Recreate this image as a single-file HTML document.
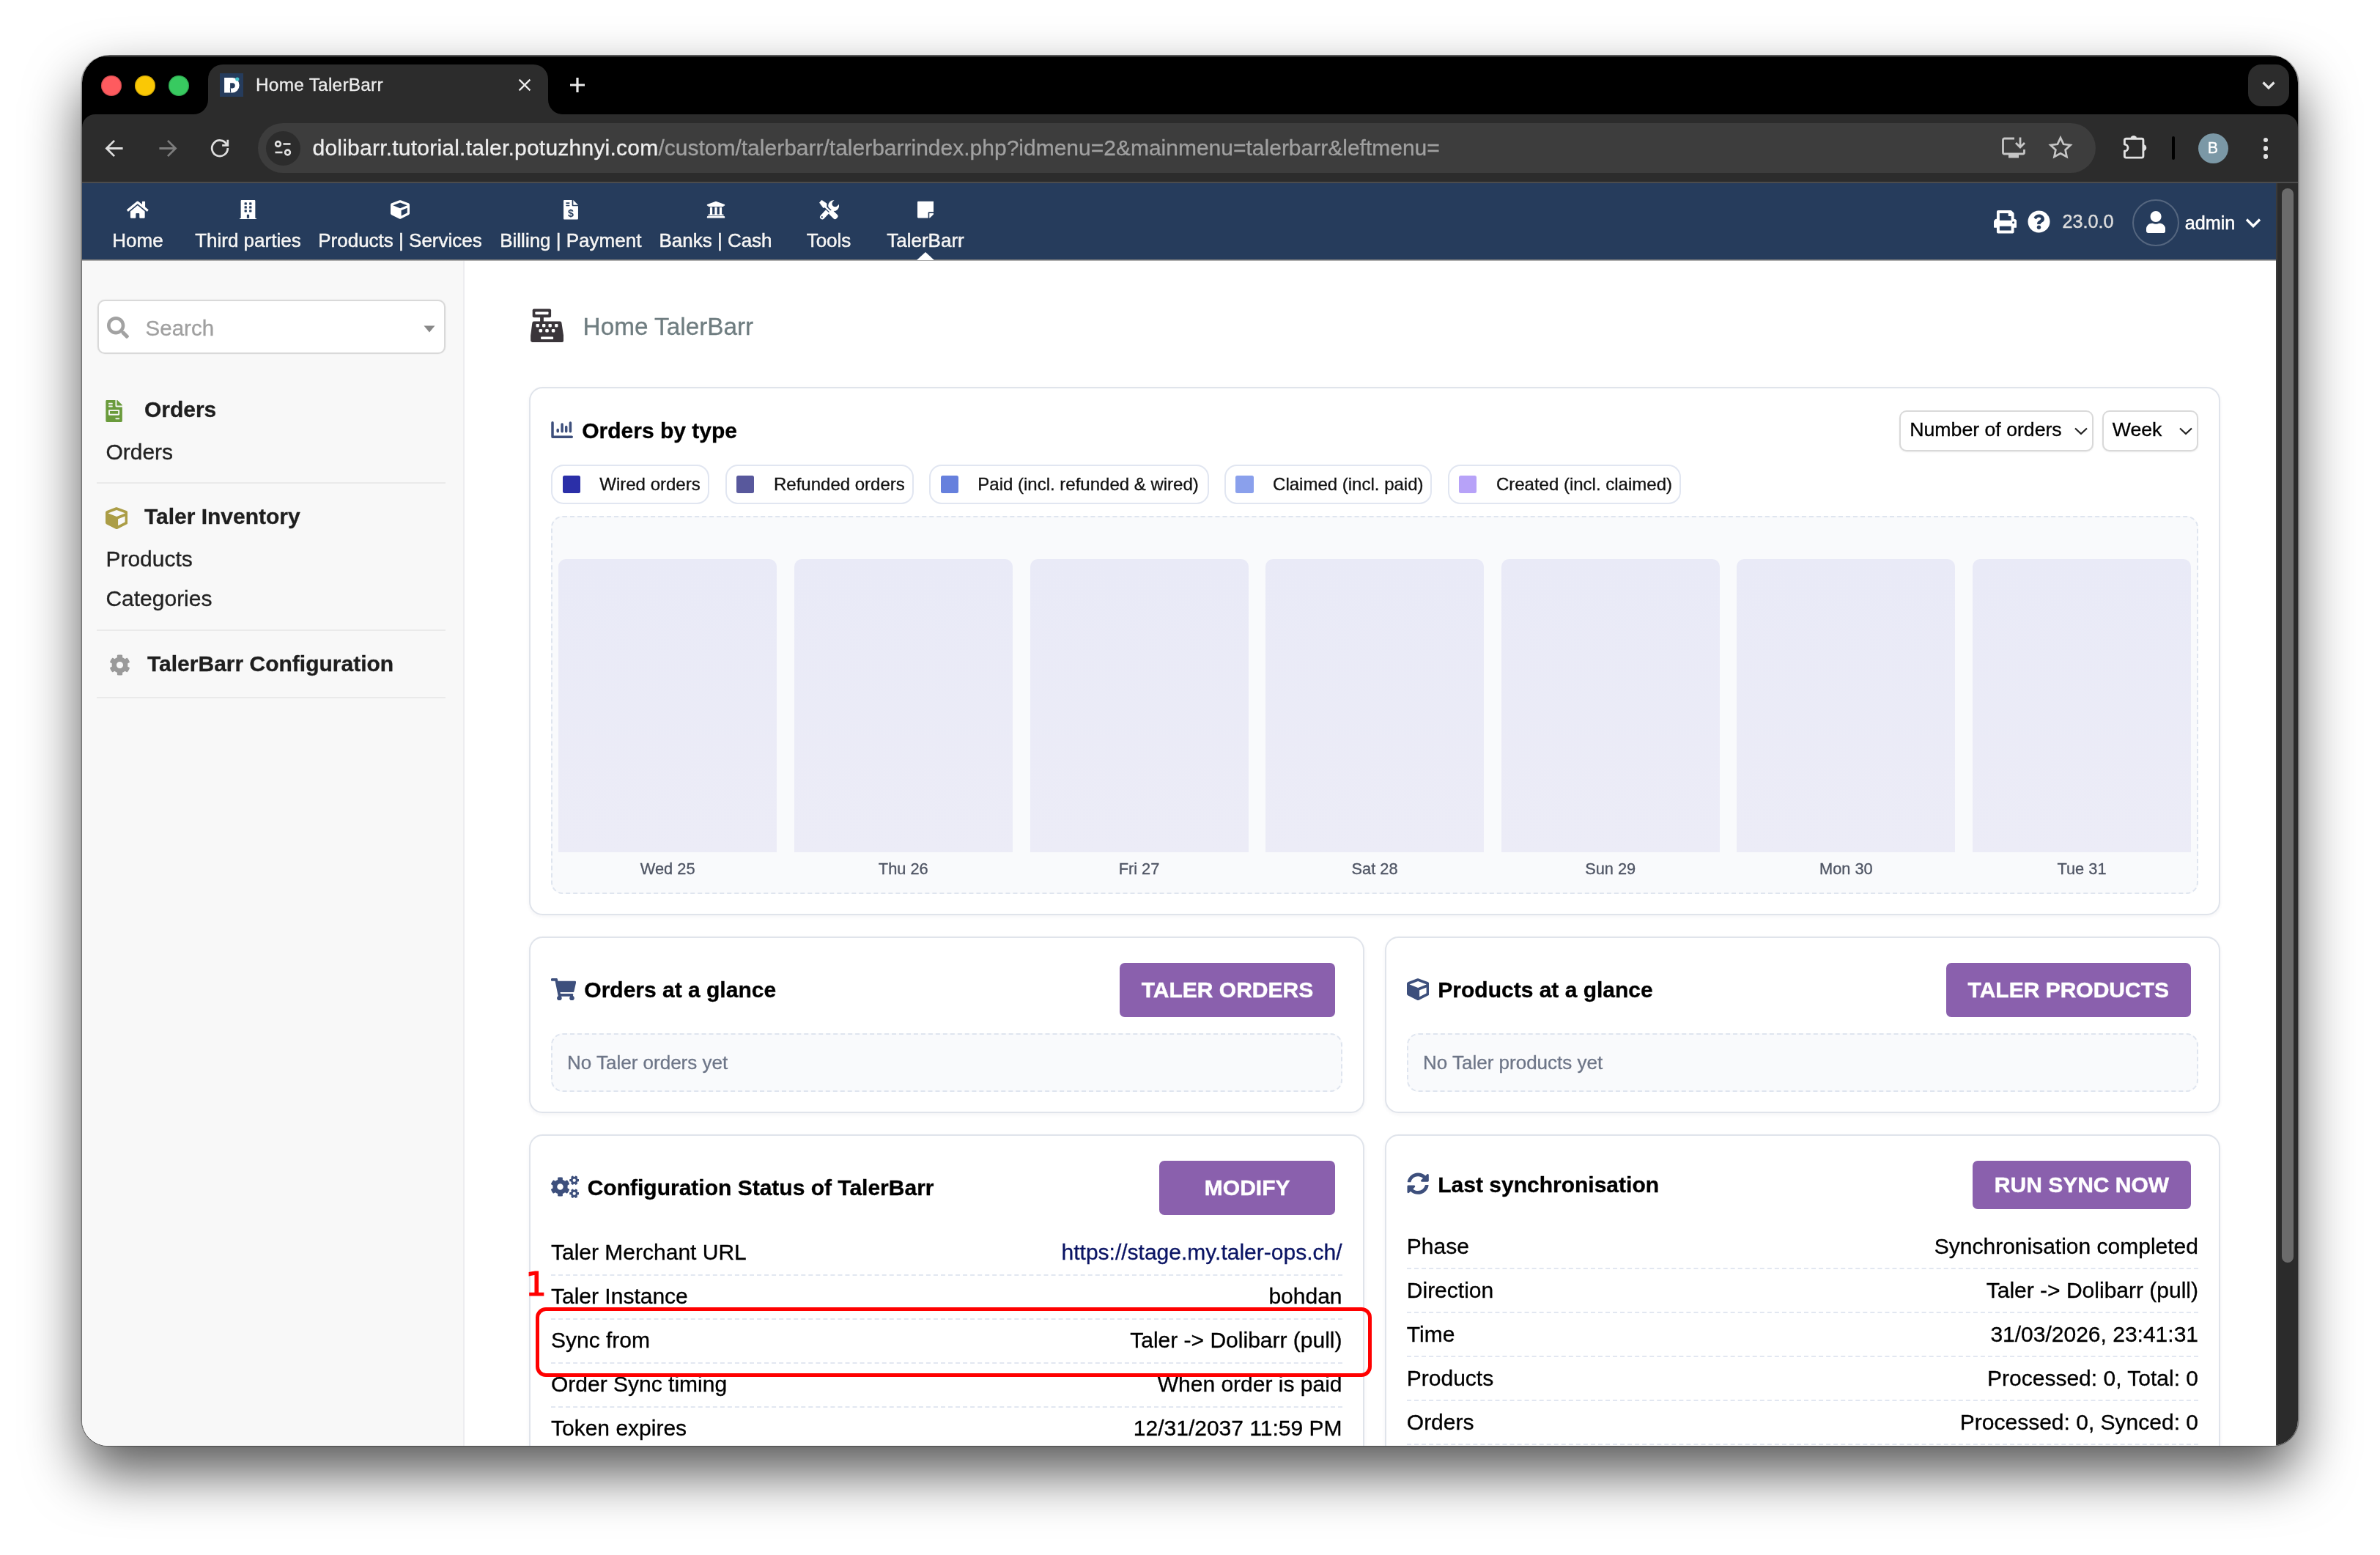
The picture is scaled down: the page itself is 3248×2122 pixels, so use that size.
<!DOCTYPE html>
<html lang="en"><head><meta charset="utf-8"><title>Home TalerBarr</title>
<style>
html,body{margin:0;padding:0;}
body{width:3248px;height:2122px;background:#fff;position:relative;overflow:hidden;font-family:"Liberation Sans",sans-serif;}
.b{position:absolute;box-sizing:border-box;display:block;}
.t{position:absolute;white-space:nowrap;line-height:1;-webkit-text-stroke:.32px;}
#win{position:absolute;left:112px;top:75px;width:3024px;height:1898px;border-radius:38px 38px 35px 35px;overflow:hidden;background:#fff;}
#shadow{position:absolute;left:112px;top:75px;width:3024px;height:1898px;border-radius:38px 38px 35px 35px;
 box-shadow:-1.5px 0 0 0 rgba(0,0,0,.32),1.5px 0 0 0 rgba(0,0,0,.32),0 1.2px 0 0 rgba(0,0,0,.3),0 37px 76px rgba(0,0,0,.66);}
#in{position:absolute;left:-112px;top:-75px;width:3248px;height:2122px;will-change:transform;}
</style></head><body>
<div id="shadow"></div>
<div id="win"><div id="in">

<div class="b" style="left:112.0px;top:75.0px;width:3024.0px;height:115.0px;background:#000;"></div>
<div class="b" style="left:112.0px;top:75.0px;width:3024.0px;height:3.4px;background:linear-gradient(#6c6c6c,#3c3c3c 60%,#000);"></div>
<div class="b" style="left:112.0px;top:156.0px;width:3024.0px;height:93.0px;background:#2c2c2c;border-radius:18px 18px 0 0;"></div>
<div class="b" style="left:112.0px;top:248.0px;width:3024.0px;height:2.0px;background:#4c4c4c;"></div>
<div class="b" style="left:283.5px;top:87.6px;width:464.3px;height:72.4px;background:#2c2c2c;border-radius:20px 20px 0 0;"></div>
<svg class="b" style="left:263.5px;top:136.0px;" width="20.0" height="20.0" viewBox="0 0 20 20"><path fill="#2c2c2c" d="M20 0v20H0A20 20 0 0 0 20 0z"/></svg>
<svg class="b" style="left:747.8px;top:136.0px;" width="20.0" height="20.0" viewBox="0 0 20 20"><path fill="#2c2c2c" d="M0 0v20h20A20 20 0 0 1 0 0z"/></svg>
<div class="b" style="left:137.9px;top:102.7px;width:28.4px;height:28.4px;background:#fe5b5f;border-radius:50%;box-shadow:inset 0 0 0 1.200px rgba(0,0,0,.16);"></div>
<div class="b" style="left:183.8px;top:102.7px;width:28.4px;height:28.4px;background:#fac805;border-radius:50%;box-shadow:inset 0 0 0 1.200px rgba(0,0,0,.16);"></div>
<div class="b" style="left:229.6px;top:102.7px;width:28.4px;height:28.4px;background:#38ca60;border-radius:50%;box-shadow:inset 0 0 0 1.200px rgba(0,0,0,.16);"></div>
<div class="b" style="left:300.0px;top:100.0px;width:32.0px;height:32.0px;background:#263c5c;"></div>
<svg class="b" style="left:300.0px;top:100.0px;" width="32.0" height="32.0" viewBox="0 0 32 32"><path fill="#fff" fill-rule="evenodd" d="M6.100 6H17.300A9.300 10.250 0 0 1 17.300 26.500H6.100zM14.100 13.300V20.400H17.400A3.400 3.550 0 0 0 17.400 13.300z"/><path d="M14.300 20.400L14.700 26.500" stroke="#263c5c" stroke-width="1.100"/><circle cx="23.800" cy="8" r="2.600" fill="#45c0c8"/></svg>
<div class="t" style="left:349.0px;top:103.6px;font-size:24.4px;color:#ececec;font-weight:400;letter-spacing:.25px;">Home TalerBarr</div>
<svg class="b" style="left:704.0px;top:104.0px;" width="24.0" height="24.0" viewBox="0 0 24 24"><path d="M4.600 4.600l14.800 14.800M19.400 4.600l-14.800 14.800" stroke="#eaeaea" stroke-width="2.300" fill="none" stroke-linecap="butt"/></svg>
<svg class="b" style="left:774.0px;top:102.0px;" width="28.0" height="28.0" viewBox="0 0 28 28"><path d="M14 4v20M4 14h20" stroke="#eaeaea" stroke-width="3.200" fill="none"/></svg>
<div class="b" style="left:3068.0px;top:88.0px;width:56.0px;height:56.5px;background:#2c2c2c;border-radius:18px;"></div>
<svg class="b" style="left:3082.0px;top:104.0px;" width="28.0" height="24.0" viewBox="0 0 28 24"><path d="M6.500 8.500l7.500 7.500 7.500-7.500" stroke="#e6e6e6" stroke-width="3.200" fill="none"/></svg>
<svg class="b" style="left:137.5px;top:183.5px;" width="37.0" height="37.0" viewBox="0 0 40 40"><path d="M32 20H9M19.500 8.500L8 20l11.500 11.500" stroke="#dedede" stroke-width="3" fill="none"/></svg>
<svg class="b" style="left:209.5px;top:183.5px;" width="37.0" height="37.0" viewBox="0 0 40 40"><path d="M8 20h23M20.500 8.500L32 20 20.500 31.500" stroke="#7d7d7d" stroke-width="3" fill="none"/></svg>
<svg class="b" style="left:282.0px;top:184.0px;" width="36.0" height="36.0" viewBox="0 0 40 40"><path d="M30.500 14.500A12 12 0 1 0 32 20" stroke="#dedede" stroke-width="3" fill="none"/><path d="M32 7.500v8.500h-8.500" stroke="#dedede" stroke-width="3" fill="none"/></svg>
<div class="b" style="left:352.0px;top:168.0px;width:2508.0px;height:68.0px;background:#3d3d3d;border-radius:34px;"></div>
<div class="b" style="left:362.5px;top:178.5px;width:47.0px;height:47.0px;background:#2c2c2c;border-radius:50%;"></div>
<svg class="b" style="left:370.0px;top:186.0px;" width="32.0" height="32.0" viewBox="0 0 32 32"><g stroke="#e2e2e2" stroke-width="2.600" fill="none"><circle cx="9.500" cy="10.500" r="3.400"/><path d="M16.500 10.500h10"/><circle cx="22.500" cy="22" r="3.400"/><path d="M5.500 22h10"/></g></svg>
<div class="t" style="left:426.500px;top:186.9px;font-size:30px;color:#a0a0a0;letter-spacing:0px;"><span style="color:#eeeeee;letter-spacing:.225px;">dolibarr.tutorial.taler.potuzhnyi.com</span>/custom/talerbarr/talerbarrindex.php?idmenu=2&amp;mainmenu=talerbarr&amp;leftmenu=</div>
<svg class="b" style="left:2730.0px;top:184.0px;" width="36.0" height="36.0" viewBox="0 0 36 36"><g stroke="#c6c6c6" stroke-width="2.800" fill="none"><path d="M19 5H5.500a2 2 0 0 0-2 2v17a2 2 0 0 0 2 2h25a2 2 0 0 0 2-2v-4"/><path d="M27 3.500v13M21 11l6 6 6-6"/></g><rect x="11" y="27" width="14" height="4.500" fill="#c6c6c6"/></svg>
<svg class="b" style="left:2795.0px;top:184.0px;" width="34.0" height="34.0" viewBox="0 0 34 34"><path d="M17 4l4.100 8.800 9.500 1.100-7 6.600 1.900 9.500L17 25.300 8.500 30l1.900-9.500-7-6.600 9.500-1.100z" stroke="#c6c6c6" stroke-width="2.700" fill="none" stroke-linejoin="miter"/></svg>
<svg class="b" style="left:2896.0px;top:182.0px;" width="36.0" height="36.0" viewBox="0 0 36 36"><path d="M3.400 15.100V9.300a2 2 0 0 1 2-2H26.900a2 2 0 0 1 2 2V31.100a2 2 0 0 1-2 2H5.400a2 2 0 0 1-2-2V24.300A4.600 4.600 0 0 0 3.400 15.100z" stroke="#e2e2e2" stroke-width="2.900" fill="none" stroke-linejoin="round"/><path d="M11.400 7.300a4.400 4.400 0 0 1 8.800 0z" fill="#e2e2e2"/><path d="M28.900 15.300a4.400 4.400 0 0 1 0 8.800z" fill="#e2e2e2"/></svg>
<div class="b" style="left:2964.0px;top:185.5px;width:4.0px;height:32.5px;background:#000;border-radius:2px;"></div>
<div class="b" style="left:2999.5px;top:181.5px;width:41.0px;height:41.0px;background:#7b98a6;border-radius:50%;"></div>
<div class="t" style="left:3020.0px;top:191.9px;font-size:21.5px;color:#fff;font-weight:400;transform:translateX(-50%);">B</div>
<div class="b" style="left:3088.5px;top:187.6px;width:6.8px;height:6.8px;background:#e2e2e2;border-radius:50%;"></div>
<div class="b" style="left:3088.5px;top:198.9px;width:6.8px;height:6.8px;background:#e2e2e2;border-radius:50%;"></div>
<div class="b" style="left:3088.5px;top:210.0px;width:6.8px;height:6.8px;background:#e2e2e2;border-radius:50%;"></div>
<div class="b" style="left:112.0px;top:250.0px;width:2994.0px;height:1723.0px;background:#fff;"></div>
<div class="b" style="left:112.0px;top:354.0px;width:522.0px;height:1619.0px;background:#f8f8f8;border-right:2px solid #ededf0;"></div>
<div class="b" style="left:112.0px;top:250.0px;width:2994.0px;height:103.6px;background:#263c5c;"></div>
<div class="b" style="left:112.0px;top:353.6px;width:2994.0px;height:2.6px;background:linear-gradient(#707070,#8c8c8c 55%,rgba(190,190,190,.6));"></div>
<div class="t" style="left:188.0px;top:315.3px;font-size:26px;color:#f6f6f6;font-weight:400;transform:translateX(-50%);-webkit-text-stroke:.5px;text-shadow:0 0 2px rgba(0,0,0,.3);">Home</div>
<svg class="b" style="left:173.2px;top:272.9px;" width="29.6" height="26.3" viewBox="0 0 576 512"><path fill="#fff" d="M280.37 148.26L96 300.11V464a16 16 0 0 0 16 16l112.06-.29a16 16 0 0 0 15.92-16V368a16 16 0 0 1 16-16h64a16 16 0 0 1 16 16v95.64a16 16 0 0 0 16 16.05L464 480a16 16 0 0 0 16-16V300L295.67 148.26a12.19 12.19 0 0 0-15.3 0zM571.6 251.47L488 182.56V44.05a12 12 0 0 0-12-12h-56a12 12 0 0 0-12 12v72.61L318.47 43a48 48 0 0 0-61 0L4.34 251.47a12 12 0 0 0-1.6 16.9l25.5 31A12 12 0 0 0 45.15 301l235.22-193.74a12.19 12.19 0 0 1 15.3 0L530.9 301a12 12 0 0 0 16.9-1.6l25.5-31a12 12 0 0 0-1.7-16.93z"/></svg>
<div class="t" style="left:338.4px;top:315.3px;font-size:26px;color:#f6f6f6;font-weight:400;transform:translateX(-50%);-webkit-text-stroke:.5px;text-shadow:0 0 2px rgba(0,0,0,.3);">Third parties</div>
<svg class="b" style="left:326.9px;top:272.9px;" width="23.0" height="26.3" viewBox="0 0 448 512"><path fill="#fff" d="M436 480h-20V24c0-13.255-10.745-24-24-24H56C42.745 0 32 10.745 32 24v456H12c-6.627 0-12 5.373-12 12v20h448v-20c0-6.627-5.373-12-12-12zM128 76c0-6.627 5.373-12 12-12h40c6.627 0 12 5.373 12 12v40c0 6.627-5.373 12-12 12h-40c-6.627 0-12-5.373-12-12V76zm0 96c0-6.627 5.373-12 12-12h40c6.627 0 12 5.373 12 12v40c0 6.627-5.373 12-12 12h-40c-6.627 0-12-5.373-12-12v-40zm52 148h-40c-6.627 0-12-5.373-12-12v-40c0-6.627 5.373-12 12-12h40c6.627 0 12 5.373 12 12v40c0 6.627-5.373 12-12 12zm76 160h-64v-84c0-6.627 5.373-12 12-12h40c6.627 0 12 5.373 12 12v84zm64-172c0 6.627-5.373 12-12 12h-40c-6.627 0-12-5.373-12-12v-40c0-6.627 5.373-12 12-12h40c6.627 0 12 5.373 12 12v40zm0-96c0 6.627-5.373 12-12 12h-40c-6.627 0-12-5.373-12-12v-40c0-6.627 5.373-12 12-12h40c6.627 0 12 5.373 12 12v40zm0-96c0 6.627-5.373 12-12 12h-40c-6.627 0-12-5.373-12-12V76c0-6.627 5.373-12 12-12h40c6.627 0 12 5.373 12 12v40z"/></svg>
<div class="t" style="left:546.0px;top:315.3px;font-size:26px;color:#f6f6f6;font-weight:400;transform:translateX(-50%);-webkit-text-stroke:.5px;text-shadow:0 0 2px rgba(0,0,0,.3);">Products | Services</div>
<svg class="b" style="left:533.0px;top:273.0px;" width="26.0" height="26.0" viewBox="0 0 512 512"><path fill="#fff" d="M239.1 6.3l-208 78c-18.7 7-31.1 25-31.1 45v225.1c0 18.2 10.3 34.8 26.5 42.900l208 104c13.500 6.800 29.400 6.800 42.900 0l208-104c16.300-8.100 26.500-24.800 26.500-42.900V129.300c0-20-12.400-37.900-31.100-44.900l-208-78C262 2.200 250 2.200 239.100 6.300zM256 68.400l192 72v1.100l-192 78-192-78v-1.100l192-72zm32 356V275.500l160-65v133.900l-160 80z"/></svg>
<div class="t" style="left:778.8px;top:315.3px;font-size:26px;color:#f6f6f6;font-weight:400;transform:translateX(-50%);-webkit-text-stroke:.5px;text-shadow:0 0 2px rgba(0,0,0,.3);">Billing | Payment</div>
<div class="t" style="left:976.5px;top:315.3px;font-size:26px;color:#f6f6f6;font-weight:400;transform:translateX(-50%);-webkit-text-stroke:.5px;text-shadow:0 0 2px rgba(0,0,0,.3);">Banks | Cash</div>
<svg class="b" style="left:963.5px;top:273.0px;" width="26.0" height="26.0" viewBox="0 0 512 512"><path fill="#fff" d="M496 128v16a8 8 0 0 1-8 8h-24v12c0 6.627-5.373 12-12 12H60c-6.627 0-12-5.373-12-12v-12H24a8 8 0 0 1-8-8v-16a8 8 0 0 1 4.941-7.392l232-88a7.996 7.996 0 0 1 6.118 0l232 88A8 8 0 0 1 496 128zm-24 304H40c-13.255 0-24 10.745-24 24v16a8 8 0 0 0 8 8h464a8 8 0 0 0 8-8v-16c0-13.255-10.745-24-24-24zM96 192v192H60c-6.627 0-12 5.373-12 12v20h416v-20c0-6.627-5.373-12-12-12h-36V192h-64v192h-64V192h-64v192h-64V192H96z"/></svg>
<div class="t" style="left:1131.0px;top:315.3px;font-size:26px;color:#f6f6f6;font-weight:400;transform:translateX(-50%);-webkit-text-stroke:.5px;text-shadow:0 0 2px rgba(0,0,0,.3);">Tools</div>
<div class="t" style="left:1263.0px;top:315.3px;font-size:26px;color:#f6f6f6;font-weight:400;transform:translateX(-50%);-webkit-text-stroke:.5px;text-shadow:0 0 2px rgba(0,0,0,.3);">TalerBarr</div>
<svg class="b" style="left:1251.6px;top:273.0px;" width="22.8" height="26.0" viewBox="0 0 448 512"><path fill="#fff" d="M312 320h136V56c0-13.3-10.7-24-24-24H24C10.7 32 0 42.7 0 56v400c0 13.3 10.7 24 24 24h264V344c0-13.2 10.8-24 24-24zm129 55l-98 98c-4.5 4.5-10.6 7-17 7h-6V352h128v6.1c0 6.300-2.500 12.400-7 16.900z"/></svg>
<svg class="b" style="left:768.8px;top:273.0px;" width="20.0" height="26.5" viewBox="0 0 384 512"><path fill="#fff" d="M224 0H24C10.700 0 0 10.700 0 24v464c0 13.300 10.700 24 24 24h336c13.300 0 24-10.700 24-24V160H248c-13.200 0-24-10.800-24-24zM64 72c0-4.400 3.600-8 8-8h80c4.400 0 8 3.600 8 8v16c0 4.400-3.600 8-8 8H72c-4.400 0-8-3.600-8-8zm0 64c0-4.400 3.600-8 8-8h80c4.400 0 8 3.600 8 8v16c0 4.400-3.600 8-8 8H72c-4.400 0-8-3.600-8-8zM256 0v128h128L256 0z"/><text x="192" y="440" font-size="275" font-weight="700" text-anchor="middle" fill="#263c5c" font-family="Liberation Sans,sans-serif">$</text></svg>
<svg class="b" style="left:1118.0px;top:273.0px;" width="26.5" height="26.5" viewBox="0 0 26 26"><g fill="none"><path d="M4.200 22.700L11.400 15" stroke="#fff" stroke-width="6.400" stroke-linecap="round"/><circle cx="3.700" cy="22.800" r="1.100" fill="#263c5c"/><path d="M15.600 11.200L11.800 15" stroke="#fff" stroke-width="5.200"/><circle cx="19.300" cy="7.500" r="7.300" fill="#fff"/><path d="M21.300 4.900L28 -1.800" stroke="#263c5c" stroke-width="8.400" stroke-linecap="round"/><path d="M6 7L16.500 16.800" stroke="#263c5c" stroke-width="4.800"/><polygon points="3.300,0.300 9.800,4.750 9.800,8.800 5.500,10.300 0.500,3.500" fill="#fff" stroke="#fff" stroke-width=".8" stroke-linejoin="round"/><path d="M8 9L15.500 16" stroke="#fff" stroke-width="2.300"/><g transform="translate(14.300,14.900) rotate(45)"><rect x="0" y="-3.600" width="13.200" height="7.200" rx="2.800" fill="#fff"/></g></g></svg>
<svg class="b" style="left:1251.0px;top:344.0px;" width="24.0" height="11.0" viewBox="0 0 24 11"><path d="M0 11L12 0l12 11z" fill="#fff"/></svg>
<svg class="b" style="left:2720.7px;top:287.2px;" width="31.5" height="31.5" viewBox="0 0 512 512"><path fill="#fff" d="M448 192V77.25c0-8.490-3.370-16.620-9.370-22.630L393.370 9.370c-6-6-14.140-9.370-22.630-9.370H96C78.330 0 64 14.330 64 32v160c-35.350 0-64 28.650-64 64v112c0 8.840 7.160 16 16 16h48v96c0 17.670 14.330 32 32 32h320c17.670 0 32-14.330 32-32v-96h48c8.840 0 16-7.160 16-16V256c0-35.350-28.650-64-64-64zm-64 256H128v-96h256v96zm0-224H128V64h192v48c0 8.840 7.160 16 16 16h48v96zm48 72c-13.250 0-24-10.750-24-24 0-13.260 10.750-24 24-24s24 10.740 24 24c0 13.250-10.750 24-24 24z"/></svg>
<svg class="b" style="left:2767.0px;top:287.3px;" width="31.0" height="31.0" viewBox="0 0 512 512"><path fill="#fff" d="M504 256c0 136.997-111.043 248-248 248S8 392.997 8 256C8 119.083 119.043 8 256 8s248 111.083 248 248zM262.655 90c-54.497 0-89.255 22.957-116.549 63.758-3.536 5.286-2.353 12.415 2.715 16.258l34.699 26.310c5.205 3.947 12.621 3.008 16.665-2.122 17.864-22.658 30.113-35.797 57.303-35.797 20.429 0 45.698 13.148 45.698 32.958 0 14.976-12.363 22.667-32.534 33.976C247.128 238.528 216 254.941 216 296v4c0 6.627 5.373 12 12 12h56c6.627 0 12-5.373 12-12v-1.333c0-28.462 83.186-29.647 83.186-106.667 0-58.002-60.165-102-116.531-102zM256 338c-25.365 0-46 20.635-46 46 0 25.364 20.635 46 46 46s46-20.636 46-46c0-25.365-20.635-46-46-46z"/></svg>
<div class="t" style="left:2814.6px;top:289.5px;font-size:25.2px;color:#dcdcdc;font-weight:400;-webkit-text-stroke:.45px;">23.0.0</div>
<div class="b" style="left:2910.0px;top:272.0px;width:64.0px;height:64.0px;border:2px solid rgba(255,255,255,.22);border-radius:50%;"></div>
<svg class="b" style="left:2929.1px;top:287.7px;" width="26.2" height="30.0" viewBox="0 0 448 512"><path fill="#fff" d="M224 256c70.7 0 128-57.3 128-128S294.7 0 224 0 96 57.3 96 128s57.3 128 128 128zm89.6 32h-16.7c-22.2 10.2-46.9 16-72.9 16s-50.6-5.8-72.9-16h-16.7C60.2 288 0 348.2 0 422.400V464c0 26.500 21.500 48 48 48h352c26.500 0 48-21.500 48-48v-41.600c0-74.200-60.200-134.400-134.400-134.400z"/></svg>
<div class="t" style="left:2981.7px;top:291.9px;font-size:25.2px;color:#fff;font-weight:400;-webkit-text-stroke:.5px;text-shadow:0 0 2px rgba(0,0,0,.3);">admin</div>
<svg class="b" style="left:3063.0px;top:295.0px;" width="24.0" height="18.0" viewBox="0 0 24 18"><path d="M3 4.500l9 9 9-9" stroke="#fff" stroke-width="3.400" fill="none"/></svg>
<div class="b" style="left:132.6px;top:408.6px;width:475.4px;height:74.6px;background:#fff;border:2px solid #d9d9d9;border-radius:10px;box-shadow:0 0 2px rgba(0,0,0,.08);"></div>
<svg class="b" style="left:146.0px;top:431.6px;" width="30.0" height="30.0" viewBox="0 0 512 512"><path fill="#a2a2a2" d="M505 442.7L405.3 343c-4.5-4.5-10.6-7-17-7H372c27.6-35.3 44-79.7 44-128C416 93.1 322.9 0 208 0S0 93.1 0 208s93.1 208 208 208c48.3 0 92.7-16.4 128-44v16.3c0 6.400 2.500 12.500 7 17l99.700 99.700c9.400 9.400 24.600 9.400 33.900 0l28.300-28.300c9.400-9.400 9.400-24.600.100-34zM208 336c-70.700 0-128-57.200-128-128 0-70.700 57.200-128 128-128 70.700 0 128 57.200 128 128 0 70.700-57.200 128-128 128z"/></svg>
<div class="t" style="left:198.6px;top:433.3px;font-size:29.5px;color:#a0a0a0;font-weight:400;">Search</div>
<svg class="b" style="left:578.0px;top:444.0px;" width="16.0" height="10.0" viewBox="0 0 16 10"><path d="M0.500 0.500h15L8 9.500z" fill="#888"/></svg>
<svg class="b" style="left:143.8px;top:545.7px;" width="23.2" height="30.0" viewBox="0 0 384 512"><path fill="#6a9b3c" d="M288 256H96v64h192v-64zm89-151L279.100 7c-4.500-4.500-10.600-7-17-7H256v128h128v-6.100c0-6.300-2.500-12.400-7-16.900zm-153 31V0H24C10.700 0 0 10.700 0 24v464c0 13.300 10.700 24 24 24h336c13.300 0 24-10.700 24-24V160H248c-13.200 0-24-10.800-24-24zM64 72c0-4.420 3.580-8 8-8h80c4.420 0 8 3.580 8 8v16c0 4.420-3.580 8-8 8H72c-4.420 0-8-3.580-8-8V72zm0 64c0-4.420 3.580-8 8-8h80c4.420 0 8 3.580 8 8v16c0 4.420-3.580 8-8 8H72c-4.420 0-8-3.580-8-8v-16zm256 304c0 4.420-3.580 8-8 8h-80c-4.420 0-8-3.580-8-8v-16c0-4.420 3.580-8 8-8h80c4.420 0 8 3.580 8 8v16zm0-200v96c0 8.840-7.160 16-16 16H80c-8.840 0-16-7.160-16-16v-96c0-8.840 7.160-16 16-16h224c8.840 0 16 7.160 16 16z"/></svg>
<div class="t" style="left:196.9px;top:544.1px;font-size:30px;color:#1e1e1e;font-weight:700;">Orders</div>
<div class="t" style="left:144.4px;top:602.1px;font-size:30px;color:#222;font-weight:400;">Orders</div>
<div class="b" style="left:132.0px;top:658.0px;width:476.0px;height:2.0px;background:#eaeaea;"></div>
<svg class="b" style="left:144.0px;top:691.5px;" width="30.4" height="30.4" viewBox="0 0 512 512"><path fill="#ab9d46" d="M239.1 6.3l-208 78c-18.7 7-31.1 25-31.1 45v225.1c0 18.2 10.3 34.8 26.5 42.900l208 104c13.500 6.800 29.400 6.800 42.900 0l208-104c16.300-8.100 26.500-24.800 26.500-42.900V129.300c0-20-12.400-37.900-31.100-44.900l-208-78C262 2.200 250 2.200 239.100 6.300zM256 68.400l192 72v1.100l-192 78-192-78v-1.100l192-72zm32 356V275.500l160-65v133.900l-160 80z"/></svg>
<div class="t" style="left:196.9px;top:690.0px;font-size:30px;color:#1e1e1e;font-weight:700;">Taler Inventory</div>
<div class="t" style="left:144.4px;top:747.6px;font-size:30px;color:#222;font-weight:400;">Products</div>
<div class="t" style="left:144.4px;top:802.1px;font-size:30px;color:#222;font-weight:400;">Categories</div>
<div class="b" style="left:132.0px;top:859.0px;width:476.0px;height:2.0px;background:#eaeaea;"></div>
<svg class="b" style="left:148.5px;top:893.0px;" width="29.0" height="29.0" viewBox="0 0 512 512"><path fill="#9a9a9a" d="M487.4 315.7l-42.6-24.600c4.300-23.200 4.300-47 0-70.200l42.600-24.600c4.900-2.800 7.100-8.600 5.500-14-11.100-35.600-30-67.800-54.700-94.600-3.800-4.100-10-5.100-14.800-2.300L380.800 110c-17.900-15.400-38.500-27.300-60.800-35.100V25.800c0-5.600-3.900-10.500-9.400-11.700-36.700-8.200-74.300-7.800-109.200 0-5.500 1.200-9.400 6.100-9.400 11.700V75c-22.200 7.900-42.800 19.800-60.800 35.100L88.700 85.500c-4.900-2.800-11-1.900-14.800 2.300-24.700 26.700-43.600 58.900-54.700 94.600-1.700 5.400.6 11.200 5.500 14L67.300 221c-4.300 23.200-4.300 47 0 70.200l-42.600 24.600c-4.900 2.800-7.100 8.600-5.500 14 11.100 35.600 30 67.800 54.700 94.600 3.800 4.100 10 5.100 14.800 2.300l42.600-24.600c17.900 15.400 38.500 27.300 60.800 35.100v49.200c0 5.600 3.900 10.500 9.400 11.700 36.700 8.200 74.300 7.800 109.200 0 5.500-1.200 9.400-6.100 9.400-11.700v-49.200c22.200-7.900 42.800-19.800 60.800-35.100l42.600 24.600c4.900 2.800 11 1.900 14.800-2.300 24.700-26.700 43.600-58.900 54.700-94.600 1.500-5.500-.7-11.300-5.600-14.100zM256 336c-44.100 0-80-35.900-80-80s35.900-80 80-80 80 35.900 80 80-35.900 80-80 80z"/></svg>
<div class="t" style="left:201.0px;top:891.1px;font-size:30px;color:#1e1e1e;font-weight:700;">TalerBarr Configuration</div>
<div class="b" style="left:132.0px;top:951.0px;width:476.0px;height:2.0px;background:#eaeaea;"></div>
<svg class="b" style="left:724.1px;top:420.8px;" width="45.2" height="46.2" viewBox="0 0 45.200 46.200"><g fill="#3a353a"><rect x="2.700" y=".500" width="25.400" height="11.700" rx="1.900"/><rect x="13.100" y="11" width="4.800" height="8"/><path d="M4.700 17.600h35.400a2.300 2.300 0 0 1 2.300 2L45.100 37v6.600a2.400 2.400 0 0 1-2.400 2.400H2.500A2.400 2.400 0 0 1 .100 43.600V37L2.400 19.600a2.300 2.300 0 0 1 2.300-2z"/></g><g fill="#fff"><rect x="6.400" y="4.600" width="18.100" height="3.600" rx=".7"/><rect x="7.500" y="21" width="4.400" height="4.400" rx="1.100"/><rect x="16" y="21" width="4.400" height="4.400" rx="1.100"/><rect x="24.500" y="21" width="4.400" height="4.400" rx="1.100"/><rect x="33.100" y="21" width="4.400" height="4.400" rx="1.100"/><rect x="11.500" y="28" width="4.600" height="4.600" rx="1.500"/><rect x="20.200" y="28" width="4.600" height="4.600" rx="1.500"/><rect x="28.800" y="28" width="4.600" height="4.600" rx="1.500"/><rect x="14.100" y="38.600" width="17" height="3.400" rx=".8"/></g></svg>
<div class="t" style="left:795.6px;top:428.9px;font-size:33.3px;color:#6f7d80;font-weight:400;">Home TalerBarr</div>
<div class="b" style="left:721.8px;top:527.8px;width:2308.7px;height:721.2px;background:#fff;border:2px solid #e0e4eb;border-radius:18.500px;box-shadow:0 2px 5px rgba(30,40,80,.05);"></div>
<svg class="b" style="left:751.0px;top:574.0px;" width="33.0" height="26.0" viewBox="0 0 33 26"><g fill="none" stroke="#3d4f7c" stroke-width="3.500" stroke-linecap="round" stroke-linejoin="round"><path d="M3 2.700V22.300H29.300"/><path d="M10.200 12.500V14.800M16.100 5V14.800M21.700 8.500V14.800M27.400 3V14.800"/></g></svg>
<div class="t" style="left:794.2px;top:572.9px;font-size:30px;color:#000;font-weight:700;">Orders by type</div>
<div class="b" style="left:2592.0px;top:559.7px;width:265.0px;height:56.3px;background:#fff;border:2px solid #d9d9d9;border-radius:10px;box-shadow:0 1px 2px rgba(0,0,0,.08);"></div>
<div class="t" style="left:2606.3px;top:572.7px;font-size:26.67px;color:#000;font-weight:400;">Number of orders</div>
<svg class="b" style="left:2828.0px;top:580.0px;" width="24.0" height="16.0" viewBox="0 0 24 16"><path d="M4 4.500l8 7.500 8-7.500" stroke="#222" stroke-width="2.200" fill="none"/></svg>
<div class="b" style="left:2869.3px;top:559.7px;width:130.5px;height:56.3px;background:#fff;border:2px solid #d9d9d9;border-radius:10px;box-shadow:0 1px 2px rgba(0,0,0,.08);"></div>
<div class="t" style="left:2882.8px;top:572.7px;font-size:26.67px;color:#000;font-weight:400;">Week</div>
<svg class="b" style="left:2970.5px;top:580.0px;" width="24.0" height="16.0" viewBox="0 0 24 16"><path d="M4 4.500l8 7.500 8-7.500" stroke="#222" stroke-width="2.200" fill="none"/></svg>
<div class="b" style="left:752.0px;top:634.2px;width:216.2px;height:53.4px;background:#fff;border:2px solid #e1e6f1;border-radius:17px;"></div>
<div class="b" style="left:767.6px;top:648.5px;width:24.2px;height:24.1px;background:#2b2fa8;border-radius:2.500px;"></div>
<div class="t" style="left:818.3px;top:648.6px;font-size:24px;color:#111;font-weight:400;">Wired orders</div>
<div class="b" style="left:989.7px;top:634.2px;width:257.5px;height:53.4px;background:#fff;border:2px solid #e1e6f1;border-radius:17px;"></div>
<div class="b" style="left:1005.3px;top:648.5px;width:24.2px;height:24.1px;background:#58589c;border-radius:2.500px;"></div>
<div class="t" style="left:1056.0px;top:648.6px;font-size:24px;color:#111;font-weight:400;">Refunded orders</div>
<div class="b" style="left:1268.0px;top:634.2px;width:381.6px;height:53.4px;background:#fff;border:2px solid #e1e6f1;border-radius:17px;"></div>
<div class="b" style="left:1283.6px;top:648.5px;width:24.2px;height:24.1px;background:#6680dd;border-radius:2.500px;"></div>
<div class="t" style="left:1334.3px;top:648.6px;font-size:24px;color:#111;font-weight:400;">Paid (incl. refunded &amp; wired)</div>
<div class="b" style="left:1670.8px;top:634.2px;width:283.7px;height:53.4px;background:#fff;border:2px solid #e1e6f1;border-radius:17px;"></div>
<div class="b" style="left:1686.4px;top:648.5px;width:24.2px;height:24.1px;background:#8aa0ec;border-radius:2.500px;"></div>
<div class="t" style="left:1737.1px;top:648.6px;font-size:24px;color:#111;font-weight:400;">Claimed (incl. paid)</div>
<div class="b" style="left:1975.6px;top:634.2px;width:318.4px;height:53.4px;background:#fff;border:2px solid #e1e6f1;border-radius:17px;"></div>
<div class="b" style="left:1991.2px;top:648.5px;width:24.2px;height:24.1px;background:#b7a2f8;border-radius:2.500px;"></div>
<div class="t" style="left:2041.9px;top:648.6px;font-size:24px;color:#111;font-weight:400;">Created (incl. claimed)</div>
<div class="b" style="left:751.8px;top:703.5px;width:2248.0px;height:516.2px;background:#f9fafc;border:2px dashed #dfe5ef;border-radius:16px;"></div>
<div class="b" style="left:762.2px;top:763.0px;width:298.0px;height:400.0px;background:linear-gradient(#e9eaf7,#ececf7);border-radius:10px 10px 0 0;"></div>
<div class="t" style="left:911.2px;top:1174.9px;font-size:21.8px;color:#4f5564;font-weight:400;transform:translateX(-50%);">Wed 25</div>
<div class="b" style="left:1083.8px;top:763.0px;width:298.0px;height:400.0px;background:linear-gradient(#e9eaf7,#ececf7);border-radius:10px 10px 0 0;"></div>
<div class="t" style="left:1232.8px;top:1174.9px;font-size:21.8px;color:#4f5564;font-weight:400;transform:translateX(-50%);">Thu 26</div>
<div class="b" style="left:1405.5px;top:763.0px;width:298.0px;height:400.0px;background:linear-gradient(#e9eaf7,#ececf7);border-radius:10px 10px 0 0;"></div>
<div class="t" style="left:1554.5px;top:1174.9px;font-size:21.8px;color:#4f5564;font-weight:400;transform:translateX(-50%);">Fri 27</div>
<div class="b" style="left:1727.1px;top:763.0px;width:298.0px;height:400.0px;background:linear-gradient(#e9eaf7,#ececf7);border-radius:10px 10px 0 0;"></div>
<div class="t" style="left:1876.1px;top:1174.9px;font-size:21.8px;color:#4f5564;font-weight:400;transform:translateX(-50%);">Sat 28</div>
<div class="b" style="left:2048.7px;top:763.0px;width:298.0px;height:400.0px;background:linear-gradient(#e9eaf7,#ececf7);border-radius:10px 10px 0 0;"></div>
<div class="t" style="left:2197.7px;top:1174.9px;font-size:21.8px;color:#4f5564;font-weight:400;transform:translateX(-50%);">Sun 29</div>
<div class="b" style="left:2370.4px;top:763.0px;width:298.0px;height:400.0px;background:linear-gradient(#e9eaf7,#ececf7);border-radius:10px 10px 0 0;"></div>
<div class="t" style="left:2519.4px;top:1174.9px;font-size:21.8px;color:#4f5564;font-weight:400;transform:translateX(-50%);">Mon 30</div>
<div class="b" style="left:2692.0px;top:763.0px;width:298.0px;height:400.0px;background:linear-gradient(#e9eaf7,#ececf7);border-radius:10px 10px 0 0;"></div>
<div class="t" style="left:2841.0px;top:1174.9px;font-size:21.8px;color:#4f5564;font-weight:400;transform:translateX(-50%);">Tue 31</div>
<div class="b" style="left:721.8px;top:1278.0px;width:1140.3px;height:241.4px;background:#fff;border:2px solid #e0e4eb;border-radius:18.500px;box-shadow:0 2px 5px rgba(30,40,80,.05);"></div>
<div class="b" style="left:1889.8px;top:1278.0px;width:1140.7px;height:241.4px;background:#fff;border:2px solid #e0e4eb;border-radius:18.500px;box-shadow:0 2px 5px rgba(30,40,80,.05);"></div>
<svg class="b" style="left:751.7px;top:1334.6px;" width="34.2" height="30.4" viewBox="0 0 576 512"><path fill="#3d4f7c" d="M528.12 301.319l47.273-208C578.806 78.301 567.391 64 551.99 64H159.208l-9.166-44.810C147.758 8.021 137.930 0 126.529 0H24C10.745 0 0 10.745 0 24v16c0 13.255 10.745 24 24 24h69.883l70.248 343.435C147.325 417.100 136 435.222 136 456c0 30.928 25.072 56 56 56s56-25.072 56-56c0-15.674-6.447-29.835-16.824-40h209.647C430.447 426.165 424 440.326 424 456c0 30.928 25.072 56 56 56s56-25.072 56-56c0-22.172-12.888-41.332-31.579-50.405l5.517-24.276c3.413-15.018-8.002-29.319-23.403-29.319H218.117l-6.545-32h293.145c11.206 0 20.920-7.754 23.403-18.681z"/></svg>
<div class="t" style="left:797.3px;top:1335.8px;font-size:30px;color:#000;font-weight:700;">Orders at a glance</div>
<div class="b" style="left:1527.7px;top:1313.8px;width:294.5px;height:73.9px;background:#8a60ad;border-radius:7px;color:#fff;"></div>
<div class="t" style="left:1675.0px;top:1335.6px;font-size:30px;color:#fff;font-weight:700;transform:translateX(-50%);-webkit-text-stroke:.45px;">TALER ORDERS</div>
<div class="b" style="left:751.8px;top:1409.7px;width:1080.0px;height:80.8px;background:#f9fafc;border:2px dashed #dfe5ef;border-radius:16px;"></div>
<div class="t" style="left:774.0px;top:1437.1px;font-size:26px;color:#6e7688;font-weight:400;">No Taler orders yet</div>
<svg class="b" style="left:1920.1px;top:1334.6px;" width="30.4" height="30.4" viewBox="0 0 512 512"><path fill="#3d4f7c" d="M239.1 6.3l-208 78c-18.7 7-31.1 25-31.1 45v225.1c0 18.2 10.3 34.8 26.5 42.900l208 104c13.500 6.800 29.400 6.800 42.900 0l208-104c16.300-8.100 26.500-24.800 26.500-42.900V129.300c0-20-12.400-37.900-31.100-44.900l-208-78C262 2.200 250 2.200 239.100 6.300zM256 68.400l192 72v1.100l-192 78-192-78v-1.100l192-72zm32 356V275.500l160-65v133.900l-160 80z"/></svg>
<div class="t" style="left:1962.3px;top:1335.8px;font-size:30px;color:#000;font-weight:700;">Products at a glance</div>
<div class="b" style="left:2655.5px;top:1313.8px;width:334.7px;height:73.9px;background:#8a60ad;border-radius:7px;color:#fff;"></div>
<div class="t" style="left:2822.8px;top:1335.6px;font-size:30px;color:#fff;font-weight:700;transform:translateX(-50%);-webkit-text-stroke:.45px;">TALER PRODUCTS</div>
<div class="b" style="left:1919.7px;top:1409.7px;width:1080.1px;height:80.8px;background:#f9fafc;border:2px dashed #dfe5ef;border-radius:16px;"></div>
<div class="t" style="left:1942.0px;top:1437.1px;font-size:26px;color:#6e7688;font-weight:400;">No Taler products yet</div>
<div class="b" style="left:721.8px;top:1548.0px;width:1140.3px;height:472.0px;background:#fff;border:2px solid #e0e4eb;border-radius:18.500px;box-shadow:0 2px 5px rgba(30,40,80,.05);"></div>
<div class="b" style="left:1889.8px;top:1548.0px;width:1140.7px;height:472.0px;background:#fff;border:2px solid #e0e4eb;border-radius:18.500px;box-shadow:0 2px 5px rgba(30,40,80,.05);"></div>
<svg class="b" style="left:750.9px;top:1606.2px;" width="27.0" height="27.0" viewBox="0 0 512 512"><path fill="#3d4f7c" d="M487.4 315.7l-42.6-24.600c4.300-23.200 4.300-47 0-70.200l42.600-24.600c4.900-2.800 7.100-8.600 5.500-14-11.100-35.600-30-67.800-54.700-94.600-3.800-4.100-10-5.100-14.800-2.300L380.800 110c-17.900-15.400-38.500-27.300-60.800-35.100V25.800c0-5.600-3.900-10.500-9.400-11.700-36.700-8.200-74.300-7.800-109.200 0-5.500 1.200-9.400 6.100-9.400 11.700V75c-22.200 7.900-42.800 19.800-60.800 35.100L88.700 85.500c-4.900-2.800-11-1.900-14.800 2.300-24.700 26.700-43.600 58.900-54.700 94.600-1.700 5.400.6 11.200 5.500 14L67.300 221c-4.300 23.200-4.300 47 0 70.200l-42.600 24.600c-4.900 2.800-7.100 8.600-5.500 14 11.100 35.600 30 67.800 54.700 94.600 3.800 4.100 10 5.100 14.800 2.300l42.600-24.600c17.900 15.400 38.500 27.300 60.800 35.100v49.200c0 5.600 3.900 10.500 9.400 11.700 36.700 8.200 74.300 7.800 109.200 0 5.500-1.200 9.400-6.100 9.400-11.700v-49.200c22.200-7.900 42.800-19.800 60.800-35.100l42.600 24.600c4.900 2.800 11 1.900 14.800-2.300 24.700-26.700 43.600-58.900 54.700-94.600 1.500-5.500-.7-11.300-5.600-14.100zM256 336c-44.100 0-80-35.900-80-80s35.900-80 80-80 80 35.900 80 80-35.900 80-80 80z"/></svg>
<svg class="b" style="left:776.7px;top:1603.8px;" width="13.4" height="13.4" viewBox="0 0 512 512"><path fill="#3d4f7c" d="M487.4 315.7l-42.6-24.600c4.300-23.200 4.300-47 0-70.200l42.600-24.600c4.900-2.800 7.100-8.600 5.500-14-11.100-35.600-30-67.800-54.700-94.600-3.800-4.100-10-5.100-14.800-2.300L380.800 110c-17.900-15.400-38.500-27.300-60.800-35.100V25.800c0-5.600-3.900-10.500-9.400-11.700-36.700-8.200-74.300-7.800-109.200 0-5.500 1.200-9.400 6.100-9.400 11.700V75c-22.200 7.900-42.800 19.800-60.800 35.100L88.700 85.500c-4.900-2.800-11-1.900-14.800 2.300-24.700 26.700-43.600 58.900-54.700 94.600-1.700 5.400.6 11.200 5.500 14L67.300 221c-4.300 23.200-4.300 47 0 70.200l-42.600 24.600c-4.900 2.800-7.100 8.600-5.500 14 11.100 35.600 30 67.800 54.700 94.600 3.800 4.100 10 5.100 14.800 2.300l42.600-24.600c17.900 15.400 38.500 27.300 60.800 35.100v49.200c0 5.600 3.900 10.500 9.400 11.700 36.700 8.200 74.300 7.800 109.200 0 5.500-1.200 9.400-6.100 9.400-11.700v-49.200c22.200-7.900 42.800-19.800 60.800-35.100l42.600 24.600c4.900 2.800 11 1.900 14.800-2.300 24.700-26.700 43.600-58.900 54.700-94.600 1.500-5.500-.7-11.300-5.600-14.100zM256 336c-44.100 0-80-35.900-80-80s35.900-80 80-80 80 35.900 80 80-35.900 80-80 80z" transform="rotate(90 256.0 256.0)"/></svg>
<svg class="b" style="left:776.7px;top:1622.0px;" width="13.4" height="13.4" viewBox="0 0 512 512"><path fill="#3d4f7c" d="M487.4 315.7l-42.6-24.600c4.300-23.200 4.300-47 0-70.200l42.600-24.600c4.900-2.800 7.100-8.600 5.500-14-11.100-35.600-30-67.800-54.700-94.600-3.800-4.100-10-5.100-14.800-2.300L380.800 110c-17.900-15.400-38.500-27.300-60.800-35.100V25.800c0-5.600-3.900-10.500-9.400-11.700-36.700-8.200-74.300-7.800-109.200 0-5.500 1.200-9.400 6.100-9.400 11.700V75c-22.200 7.900-42.800 19.800-60.800 35.100L88.700 85.500c-4.900-2.800-11-1.900-14.800 2.300-24.700 26.700-43.600 58.900-54.700 94.600-1.700 5.400.6 11.200 5.500 14L67.300 221c-4.300 23.200-4.300 47 0 70.200l-42.600 24.600c-4.900 2.800-7.100 8.600-5.500 14 11.100 35.600 30 67.800 54.700 94.600 3.800 4.100 10 5.100 14.800 2.300l42.600-24.600c17.900 15.400 38.500 27.300 60.800 35.100v49.200c0 5.600 3.900 10.500 9.400 11.700 36.700 8.200 74.300 7.800 109.200 0 5.500-1.200 9.400-6.100 9.400-11.700v-49.200c22.200-7.900 42.800-19.800 60.800-35.100l42.600 24.600c4.900 2.800 11 1.900 14.800-2.300 24.700-26.700 43.600-58.900 54.700-94.600 1.500-5.500-.7-11.300-5.600-14.100zM256 336c-44.100 0-80-35.900-80-80s35.900-80 80-80 80 35.900 80 80-35.900 80-80 80z" transform="rotate(90 256.0 256.0)"/></svg>
<div class="t" style="left:801.7px;top:1605.5px;font-size:30px;color:#000;font-weight:700;">Configuration Status of TalerBarr</div>
<div class="b" style="left:1582.2px;top:1583.9px;width:240.0px;height:73.9px;background:#8a60ad;border-radius:7px;color:#fff;"></div>
<div class="t" style="left:1702.2px;top:1605.7px;font-size:30px;color:#fff;font-weight:700;transform:translateX(-50%);-webkit-text-stroke:.45px;">MODIFY</div>
<div class="t" style="left:752.0px;top:1693.8px;font-size:30px;color:#000;font-weight:400;">Taler Merchant URL</div>
<div class="t" style="left:1831.5px;top:1693.8px;font-size:30px;color:#0a1464;font-weight:400;transform:translateX(-100%);">https://stage.my.taler-ops.ch/</div>
<div class="b" style="left:752.0px;top:1738.7px;width:1079.5px;height:2.0px;border-top:2px dashed #e2e7f1;"></div>
<div class="t" style="left:752.0px;top:1753.8px;font-size:30px;color:#000;font-weight:400;">Taler Instance</div>
<div class="t" style="left:1831.5px;top:1753.8px;font-size:30px;color:#000;font-weight:400;transform:translateX(-100%);">bohdan</div>
<div class="b" style="left:752.0px;top:1798.7px;width:1079.5px;height:2.0px;border-top:2px dashed #e2e7f1;"></div>
<div class="t" style="left:752.0px;top:1813.8px;font-size:30px;color:#000;font-weight:400;">Sync from</div>
<div class="t" style="left:1831.5px;top:1813.8px;font-size:30px;color:#000;font-weight:400;transform:translateX(-100%);">Taler -&gt; Dolibarr (pull)</div>
<div class="b" style="left:752.0px;top:1858.7px;width:1079.5px;height:2.0px;border-top:2px dashed #e2e7f1;"></div>
<div class="t" style="left:752.0px;top:1873.8px;font-size:30px;color:#000;font-weight:400;">Order Sync timing</div>
<div class="t" style="left:1831.5px;top:1873.8px;font-size:30px;color:#000;font-weight:400;transform:translateX(-100%);">When order is paid</div>
<div class="b" style="left:752.0px;top:1918.7px;width:1079.5px;height:2.0px;border-top:2px dashed #e2e7f1;"></div>
<div class="t" style="left:752.0px;top:1933.8px;font-size:30px;color:#000;font-weight:400;">Token expires</div>
<div class="t" style="left:1831.5px;top:1933.8px;font-size:30px;color:#000;font-weight:400;transform:translateX(-100%);">12/31/2037 11:59 PM</div>
<div class="b" style="left:752.0px;top:1978.7px;width:1079.5px;height:2.0px;border-top:2px dashed #e2e7f1;"></div>
<svg class="b" style="left:1919.8px;top:1600.2px;" width="30.3" height="30.3" viewBox="0 0 512 512"><path fill="#3d4f7c" d="M370.72 133.28C339.458 104.008 298.888 87.962 255.848 88c-77.458.068-144.328 53.178-162.791 126.850-1.344 5.363-6.122 9.150-11.651 9.150H24.103c-7.498 0-13.194-6.807-11.807-14.176C33.933 94.924 134.813 8 256 8c66.448 0 126.791 26.136 171.315 68.685L463.030 40.970C478.149 25.851 504 36.559 504 57.941V192c0 13.255-10.745 24-24 24H345.941c-21.382 0-32.090-25.851-16.971-40.971l41.750-41.749zM32 296h134.059c21.382 0 32.090 25.851 16.971 40.971l-41.750 41.750c31.262 29.273 71.835 45.319 114.876 45.280 77.418-.070 144.315-53.144 162.787-126.849 1.344-5.363 6.122-9.150 11.651-9.150h57.304c7.498 0 13.194 6.807 11.807 14.176C478.067 417.076 377.187 504 256 504c-66.448 0-126.791-26.136-171.315-68.685L48.970 471.030C33.851 486.149 8 475.441 8 454.059V320c0-13.255 10.745-24 24-24z"/></svg>
<div class="t" style="left:1962.3px;top:1602.4px;font-size:30px;color:#000;font-weight:700;">Last synchronisation</div>
<div class="b" style="left:2691.7px;top:1583.9px;width:298.5px;height:65.8px;background:#8a60ad;border-radius:7px;color:#fff;"></div>
<div class="t" style="left:2841.0px;top:1601.6px;font-size:30px;color:#fff;font-weight:700;transform:translateX(-50%);-webkit-text-stroke:.45px;">RUN SYNC NOW</div>
<div class="t" style="left:1919.8px;top:1685.6px;font-size:30px;color:#000;font-weight:400;">Phase</div>
<div class="t" style="left:3000.0px;top:1685.6px;font-size:30px;color:#000;font-weight:400;transform:translateX(-100%);">Synchronisation completed</div>
<div class="b" style="left:1919.8px;top:1730.0px;width:1080.2px;height:2.0px;border-top:2px dashed #e2e7f1;"></div>
<div class="t" style="left:1919.8px;top:1745.6px;font-size:30px;color:#000;font-weight:400;">Direction</div>
<div class="t" style="left:3000.0px;top:1745.6px;font-size:30px;color:#000;font-weight:400;transform:translateX(-100%);">Taler -&gt; Dolibarr (pull)</div>
<div class="b" style="left:1919.8px;top:1790.0px;width:1080.2px;height:2.0px;border-top:2px dashed #e2e7f1;"></div>
<div class="t" style="left:1919.8px;top:1805.6px;font-size:30px;color:#000;font-weight:400;">Time</div>
<div class="t" style="left:3000.0px;top:1805.6px;font-size:30px;color:#000;font-weight:400;transform:translateX(-100%);">31/03/2026, 23:41:31</div>
<div class="b" style="left:1919.8px;top:1850.0px;width:1080.2px;height:2.0px;border-top:2px dashed #e2e7f1;"></div>
<div class="t" style="left:1919.8px;top:1865.6px;font-size:30px;color:#000;font-weight:400;">Products</div>
<div class="t" style="left:3000.0px;top:1865.6px;font-size:30px;color:#000;font-weight:400;transform:translateX(-100%);">Processed: 0, Total: 0</div>
<div class="b" style="left:1919.8px;top:1910.0px;width:1080.2px;height:2.0px;border-top:2px dashed #e2e7f1;"></div>
<div class="t" style="left:1919.8px;top:1925.6px;font-size:30px;color:#000;font-weight:400;">Orders</div>
<div class="t" style="left:3000.0px;top:1925.6px;font-size:30px;color:#000;font-weight:400;transform:translateX(-100%);">Processed: 0, Synced: 0</div>
<div class="b" style="left:1919.8px;top:1970.0px;width:1080.2px;height:2.0px;border-top:2px dashed #e2e7f1;"></div>
<div class="b" style="left:731.0px;top:1783.5px;width:1140.6px;height:95.5px;border:5.500px solid #ff0000;border-radius:14px;"></div>
<div class="t" style="left:717.3px;top:1729.8px;font-size:45px;color:#ff0000;font-weight:400;font-family:'DejaVu Sans','Liberation Sans',sans-serif;-webkit-text-stroke:1.200px #ff0000;">1</div>
<div class="b" style="left:3106.0px;top:250.0px;width:30.0px;height:1723.0px;background:#2b2b2b;border-left:2px solid #3a3a3a;"></div>
<div class="b" style="left:3114.0px;top:256.5px;width:16.0px;height:1466.2px;background:#6b6b6b;border-radius:8px;"></div>
</div></div>
</body></html>
